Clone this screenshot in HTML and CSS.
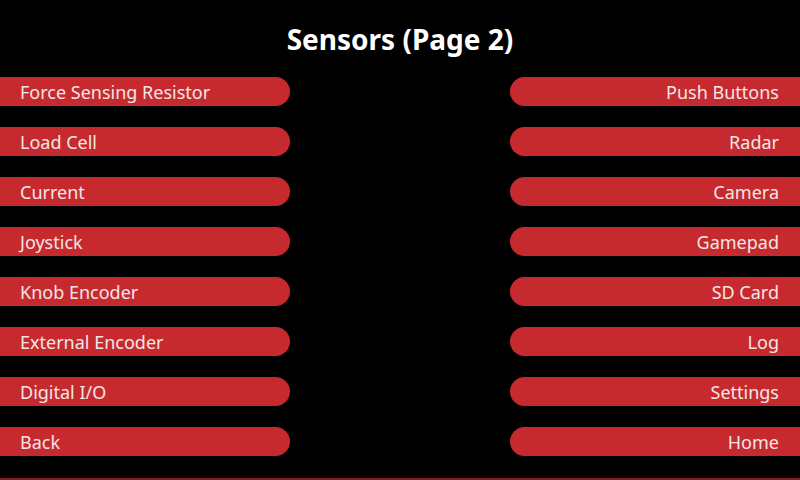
FILE: index.html
```html
<!DOCTYPE html>
<html>
<head>
<meta charset="utf-8">
<link rel="stylesheet" href="styles.css">
</head>
<body>
<div class="screen">
  <h1 class="title">Sensors (Page 2)</h1>
  <div class="grid">
    <div class="btn left">Force Sensing Resistor</div>
    <div class="btn right">Push Buttons</div>
    <div class="btn left">Load Cell</div>
    <div class="btn right">Radar</div>
    <div class="btn left">Current</div>
    <div class="btn right">Camera</div>
    <div class="btn left">Joystick</div>
    <div class="btn right">Gamepad</div>
    <div class="btn left">Knob Encoder</div>
    <div class="btn right">SD Card</div>
    <div class="btn left">External Encoder</div>
    <div class="btn right">Log</div>
    <div class="btn left">Digital I/O</div>
    <div class="btn right">Settings</div>
    <div class="btn left">Back</div>
    <div class="btn right">Home</div>
  </div>
  <div class="bottom-line"></div>
</div>
</body>
</html>
```
FILE: styles.css
```css
html, body {
  margin: 0;
  padding: 0;
  background: #000;
}
.screen {
  width: 800px;
  height: 480px;
  display: flex;
  flex-direction: column;
  font-family: "Noto Sans", "Open Sans", sans-serif;
  color: #f3e6e6;
  overflow: hidden;
}
.title {
  margin: 0;
  height: 77px;
  box-sizing: border-box;
  padding-top: 20px;
  font-size: 28px;
  line-height: 38px;
  font-weight: 700;
  text-align: center;
  color: #fff;
}
.grid {
  display: grid;
  grid-template-columns: 290px 290px;
  justify-content: space-between;
  row-gap: 21px;
}
.btn {
  height: 29px;
  box-sizing: border-box;
  padding-top: 1px;
  line-height: 29px;
  background: #c62a2f;
  font-size: 18px;
  white-space: nowrap;
}
.left {
  border-radius: 0 14.5px 14.5px 0;
  padding-left: 20px;
}
.right {
  border-radius: 14.5px 0 0 14.5px;
  padding-right: 21px;
  text-align: right;
}
.bottom-line {
  margin-top: auto;
  height: 2px;
  background: #7a2024;
}
```
